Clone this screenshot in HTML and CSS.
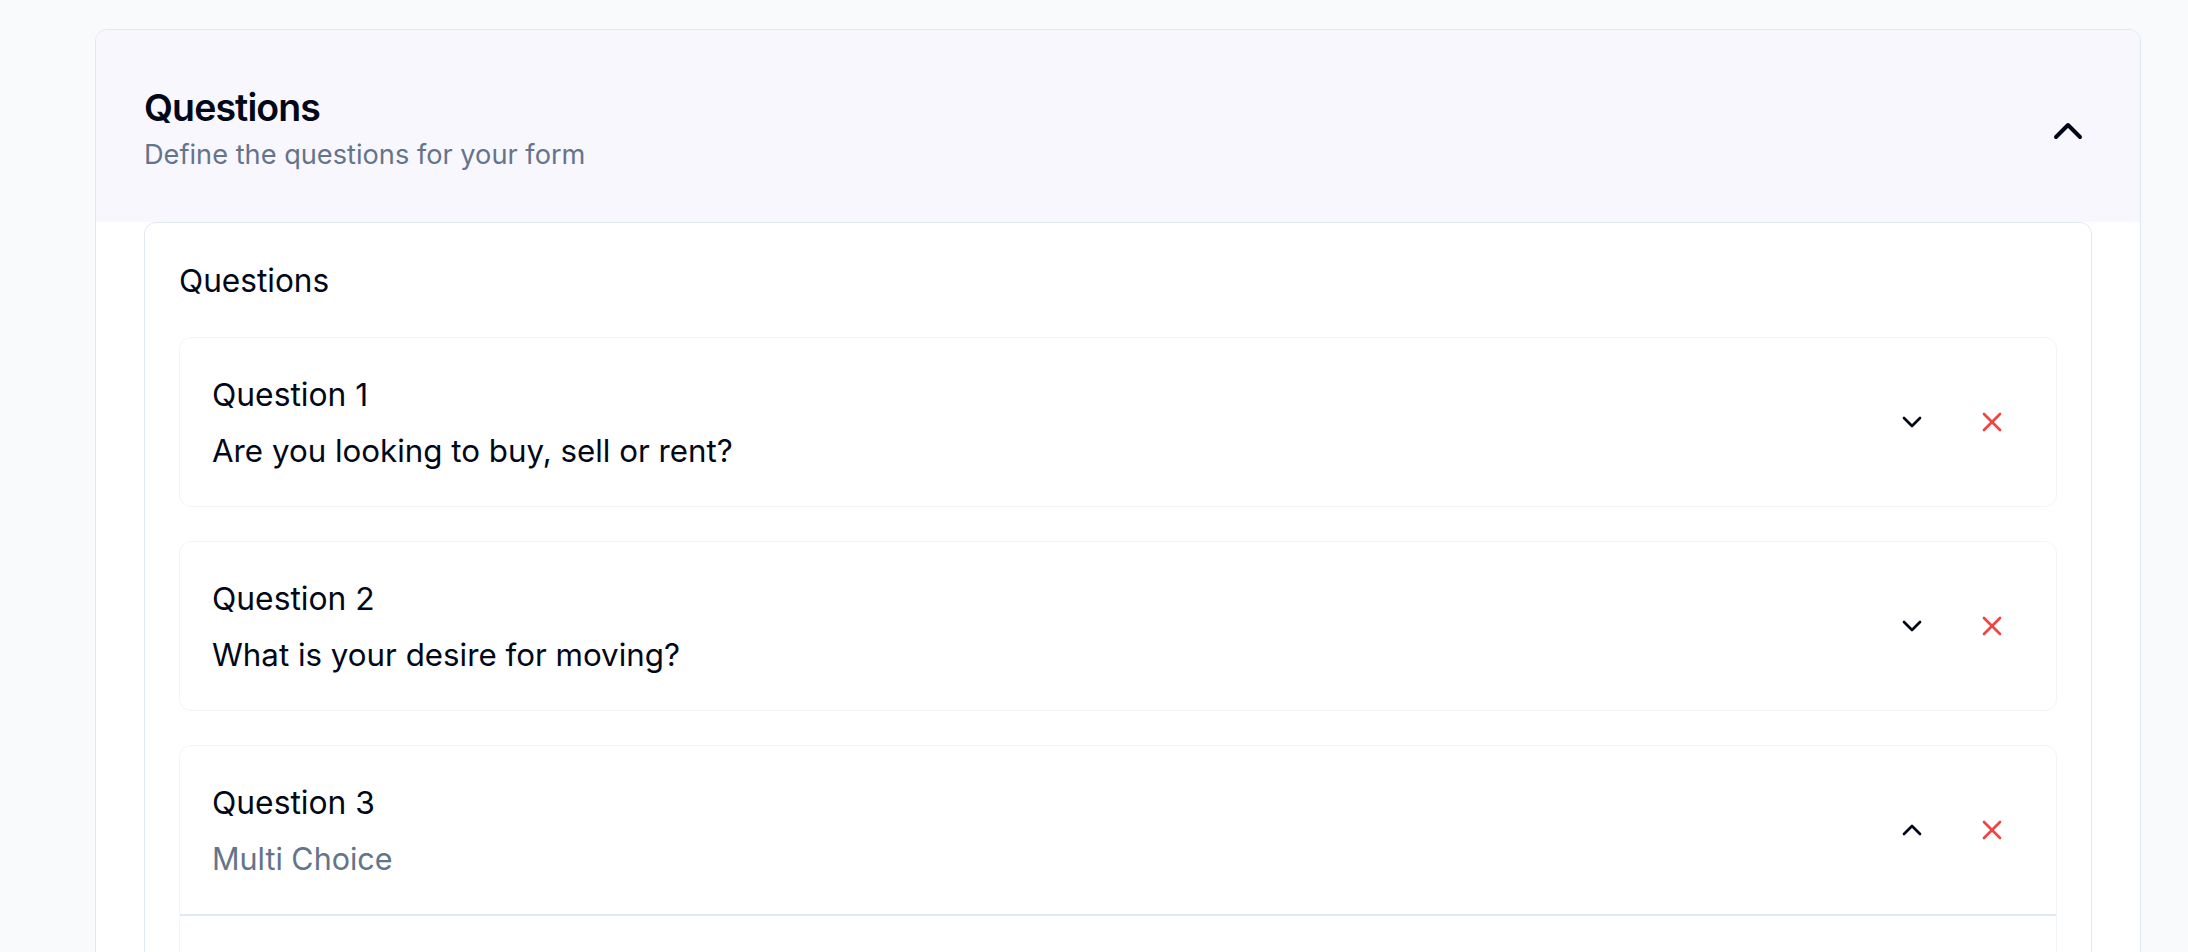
FILE: index.html
```html
<!DOCTYPE html>
<html lang="en">
<head>
<meta charset="utf-8">
<title>Questions</title>
<link rel="stylesheet" href="styles.css">
</head>
<body>
<div class="page">
  <section class="panel">
    <header class="panel-head">
      <div class="panel-titles">
        <h2 class="panel-title">Questions</h2>
        <p class="panel-sub">Define the questions for your form</p>
      </div>
      <button class="toggle-btn" type="button" aria-label="Collapse">
        <svg viewBox="0 0 24 24" fill="none" stroke="currentColor" stroke-width="2" stroke-linecap="round" stroke-linejoin="round"><path d="m18 15-6-6-6 6"/></svg>
      </button>
    </header>
    <div class="panel-body">
      <div class="q-box">
        <div class="q-box-label">Questions</div>
        <div class="q-list">
          <div class="q-card">
            <div class="q-head">
              <div class="q-text">
                <div class="q-num">Question 1</div>
                <div class="q-title">Are you looking to buy, sell or rent?</div>
              </div>
              <div class="q-actions">
                <button class="q-btn" type="button" aria-label="Expand"><svg viewBox="0 0 24 24" fill="none" stroke="currentColor" stroke-width="2" stroke-linecap="round" stroke-linejoin="round"><path d="m6 9 6 6 6-6"/></svg></button>
                <button class="q-btn danger" type="button" aria-label="Remove"><svg viewBox="0 0 24 24" fill="none" stroke="currentColor" stroke-width="2" stroke-linecap="round" stroke-linejoin="round"><path d="M18 6 6 18"/><path d="m6 6 12 12"/></svg></button>
              </div>
            </div>
          </div>
          <div class="q-card">
            <div class="q-head">
              <div class="q-text">
                <div class="q-num">Question 2</div>
                <div class="q-title">What is your desire for moving?</div>
              </div>
              <div class="q-actions">
                <button class="q-btn" type="button" aria-label="Expand"><svg viewBox="0 0 24 24" fill="none" stroke="currentColor" stroke-width="2" stroke-linecap="round" stroke-linejoin="round"><path d="m6 9 6 6 6-6"/></svg></button>
                <button class="q-btn danger" type="button" aria-label="Remove"><svg viewBox="0 0 24 24" fill="none" stroke="currentColor" stroke-width="2" stroke-linecap="round" stroke-linejoin="round"><path d="M18 6 6 18"/><path d="m6 6 12 12"/></svg></button>
              </div>
            </div>
          </div>
          <div class="q-card">
            <div class="q-head">
              <div class="q-text">
                <div class="q-num">Question 3</div>
                <div class="q-title q-type">Multi Choice</div>
              </div>
              <div class="q-actions">
                <button class="q-btn" type="button" aria-label="Collapse"><svg viewBox="0 0 24 24" fill="none" stroke="currentColor" stroke-width="2" stroke-linecap="round" stroke-linejoin="round"><path d="m18 15-6-6-6 6"/></svg></button>
                <button class="q-btn danger" type="button" aria-label="Remove"><svg viewBox="0 0 24 24" fill="none" stroke="currentColor" stroke-width="2" stroke-linecap="round" stroke-linejoin="round"><path d="M18 6 6 18"/><path d="m6 6 12 12"/></svg></button>
              </div>
            </div>
            <div class="q-body"></div>
          </div>
        </div>
      </div>
    </div>
  </section>
</div>
</body>
</html>
```

FILE: styles.css
```css
* { box-sizing: border-box; }

html, body {
  margin: 0;
  background: #f8fafc;
  font-family: Inter, "Noto Sans", "Liberation Sans", sans-serif;
  color: #020817;
}

.page {
  padding: 29px 47px 0 95px;
}

.panel {
  background: #ffffff;
  border: 1px solid #e2e8f0;
  border-radius: 12px;
  overflow: hidden;
}

.panel-head {
  display: flex;
  align-items: center;
  justify-content: space-between;
  background: #f9f7fe;
  padding: 58px 48px 49px 48px;
}

.panel-title {
  margin: 0;
  font-size: 37.5px;
  line-height: 40px;
  font-weight: 600;
  letter-spacing: -0.9px;
}

.panel-sub {
  margin: 9px 0 0;
  font-size: 27.2px;
  line-height: 36px;
  color: #64748b;
}

.toggle-btn {
  width: 48px;
  height: 48px;
  padding: 0;
  border: 0;
  background: transparent;
  color: #020817;
}
.toggle-btn svg { width: 48px; height: 48px; display: block; }

.panel-body {
  padding: 0 48px 48px;
}

.q-box {
  border: 1px solid #e2e8f0;
  border-radius: 12px;
  padding: 37px 34px 34px;
}

.q-box-label {
  font-size: 31.6px;
  line-height: 42px;
  margin-bottom: 35px;
}

.q-list {
  display: flex;
  flex-direction: column;
  gap: 34px;
}

.q-card {
  border: 1px solid #f1f5f9;
  border-radius: 12px;
}

.q-head {
  height: 168px;
  display: flex;
  align-items: center;
  justify-content: space-between;
  padding: 0 32px;
}

.q-text {
  align-self: flex-start;
  padding-top: 36px;
}

.q-num {
  font-size: 31.8px;
  line-height: 42px;
}

.q-title {
  margin-top: 14px;
  font-size: 31.3px;
  line-height: 42px;
}

.q-type {
  font-size: 30.5px;
  color: #64748b;
}

.q-actions {
  display: flex;
  gap: 16px;
}

.q-btn {
  width: 64px;
  height: 64px;
  padding: 16px;
  border: 0;
  background: transparent;
  color: #020817;
}
.q-btn svg { width: 32px; height: 32px; display: block; }
.q-btn.danger { color: #ef4444; }

.q-body {
  border-top: 2px solid #e2e8f0;
  min-height: 320px;
}
```
